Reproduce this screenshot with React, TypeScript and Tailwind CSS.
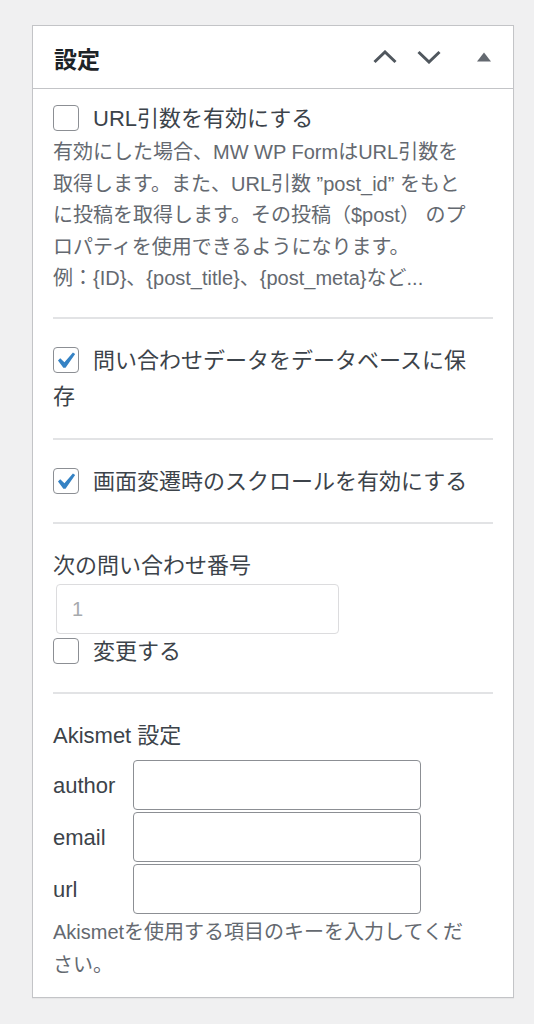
import React from "react";

const font = "font-['Liberation_Sans','Noto_Sans_CJK_JP',sans-serif]";

function Checkbox({ checked }: { checked?: boolean }) {
  return (
    <span className="relative inline-block w-[26px] h-[26px] mr-[14px] align-middle -top-[2px] rounded-[4px] border border-[#8c8f94] bg-white">
      {checked && (
        <svg viewBox="2.75 1.56 15.76 15.76" className="absolute inset-0 w-[26px] h-[26px] -left-px -top-px">
          <path d="M14.83 4.89l1.34.94-5.81 8.38H9.02L5.78 9.67l1.34-1.25 2.57 2.4z" fill="#3582c4" />
        </svg>
      )}
    </span>
  );
}

function Section({ children, first }: { children: React.ReactNode; first?: boolean }) {
  return (
    <div className={first ? "pt-[11px] pb-[22px]" : "border-t-2 border-[#e2e3e5] pt-[24px] pb-[22px]"}>{children}</div>
  );
}

export default function App() {
  return (
    <div className={`min-h-screen w-full bg-[#f0f0f1] pt-[25px] pl-[32px] pr-[20px] pb-[26px] ${font}`}>
      <div className="w-[482px] bg-white border border-[#c3c4c7] shadow-[0_1px_1px_rgba(0,0,0,0.04)]">
        {/* header */}
        <div className="h-[63px] flex items-center justify-between border-b border-[#c3c4c7] pl-[21px] pr-[7px]">
          <h2 className="mt-[6px] text-[23px] font-bold text-[#1d2327] leading-none">設定</h2>
          <div className="flex items-center">
            <button className="w-[44px] h-[44px] flex items-center justify-center">
              <svg width="24" height="14" viewBox="0 0 24 14">
                <polyline points="1.5,12 12,2 22.5,12" fill="none" stroke="#50575e" strokeWidth="3" />
              </svg>
            </button>
            <button className="w-[44px] h-[44px] flex items-center justify-center">
              <svg width="24" height="14" viewBox="0 0 24 14">
                <polyline points="1.5,2 12,12 22.5,2" fill="none" stroke="#50575e" strokeWidth="3" />
              </svg>
            </button>
            <button className="ml-[11px] w-[44px] h-[44px] flex items-center justify-center">
              <svg width="14" height="10" viewBox="0 0 14 10">
                <polygon points="7,0.5 14,9.5 0,9.5" fill="#646970" />
              </svg>
            </button>
          </div>
        </div>

        {/* body */}
        <div className="px-[20px]">
          <Section first>
            <label className="block text-[22px] leading-[37px] text-[#3c434a] whitespace-nowrap">
              <Checkbox />
              URL引数を有効にする
            </label>
            <p className="text-[20px] leading-[31.5px] text-[#646970] whitespace-nowrap">
              有効にした場合、MW WP FormはURL引数を
              <br />
              取得します。また、URL引数 ”post_id” をもと
              <br />
              に投稿を取得します。その投稿（$post） のプ
              <br />
              ロパティを使用できるようになります。
              <br />
              例：{"{ID}"}、{"{post_title}"}、{"{post_meta}"}など...
            </p>
          </Section>

          <Section>
            <label className="block text-[22px] leading-[36.6px] text-[#3c434a] whitespace-nowrap">
              <Checkbox checked />
              問い合わせデータをデータベースに保
              <br />存
            </label>
          </Section>

          <Section>
            <label className="block text-[22px] leading-[36.6px] text-[#3c434a] whitespace-nowrap">
              <Checkbox checked />
              画面変遷時のスクロールを有効にする
            </label>
          </Section>

          <Section>
            <p className="text-[22px] leading-[36px] text-[#3c434a]">次の問い合わせ番号</p>
            <input
              type="text"
              value="1"
              readOnly
              disabled
              className="ml-[3px] w-[283px] h-[50px] rounded-[4px] border border-[#dcdcde] bg-white/50 px-[15px] text-[20px] text-[#a7aaad]"
            />
            <label className="block text-[22px] leading-[36px] text-[#3c434a] whitespace-nowrap">
              <Checkbox />
              変更する
            </label>
          </Section>

          <div className="border-t-2 border-[#e2e3e5] pt-[24px] pb-[16px]">
            <p className="text-[22px] leading-[36px] text-[#3c434a]">Akismet 設定</p>
            <div className="mt-[6px] grid grid-cols-[80px_288px] gap-y-[2px] items-center">
              {["author", "email", "url"].map((name) => (
                <React.Fragment key={name}>
                  <span className="text-[22px] text-[#3c434a]">{name}</span>
                  <input
                    type="text"
                    className="h-[50px] w-[288px] rounded-[4px] border border-[#8c8f94] bg-white px-2"
                  />
                </React.Fragment>
              ))}
            </div>
            <p className="mt-[2px] text-[20px] leading-[32.3px] text-[#646970] whitespace-nowrap">
              Akismetを使用する項目のキーを入力してくだ
              <br />
              さい。
            </p>
          </div>
        </div>
      </div>
    </div>
  );
}
